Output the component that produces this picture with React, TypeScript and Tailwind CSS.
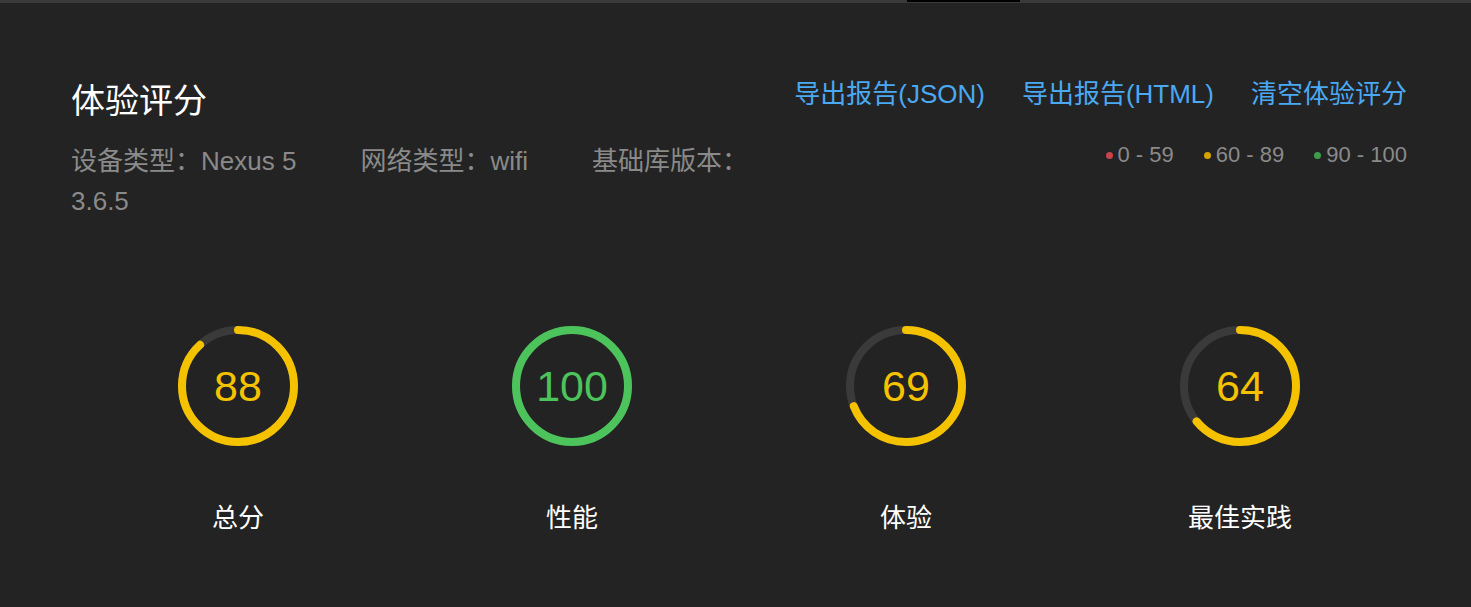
const scores = [
  { label: "总分", value: 88 },
  { label: "性能", value: 100 },
  { label: "体验", value: 69 },
  { label: "最佳实践", value: 64 },
];

function colorOf(v: number) {
  if (v >= 90) return "#4cc35b";
  if (v >= 60) return "#f5c200";
  return "#d9474f";
}

function Gauge({ value }: { value: number }) {
  const r = 56;
  const c = 2 * Math.PI * r;
  const color = colorOf(value);
  return (
    <div className="relative h-[120px] w-[120px]">
      <svg width="120" height="120" viewBox="0 0 120 120" className="-rotate-90">
        <circle cx="60" cy="60" r={r} fill="none" stroke="#3a3a3a" strokeWidth="8" />
        <circle
          cx="60"
          cy="60"
          r={r}
          fill="none"
          stroke={color}
          strokeWidth="8"
          strokeLinecap="round"
          strokeDasharray={`${(value / 100) * c} ${c}`}
        />
      </svg>
      <div
        className="absolute inset-0 flex items-center justify-center text-[43px] leading-none"
        style={{ color }}
      >
        {value}
      </div>
    </div>
  );
}

export default function App() {
  return (
    <div
      className="min-h-[607px] bg-[#232323]"
      style={{ fontFamily: '"Liberation Sans", "Noto Sans CJK SC", sans-serif' }}
    >
      <div className="h-[3px] bg-[#3a3a3a]">
        <div className="ml-[907px] h-[2px] w-[113px] bg-black" />
      </div>

      <div className="pl-[71px] pr-[64px] pt-[73px]">
        <div className="flex items-start justify-between">
          <div className="mt-[5px]">
            <h1 className="text-[34px] leading-[40px] text-white">体验评分</h1>
            <div className="mt-[20px] flex w-[700px] flex-wrap text-[26px] leading-[40px] text-[#8a8a8a]">
              <span className="mr-[64px]">设备类型：Nexus 5</span>
              <span className="mr-[64px]">网络类型：wifi</span>
              <span>基础库版本：</span>
              <span className="w-full">3.6.5</span>
            </div>
          </div>

          <div className="flex flex-col items-end">
            <div className="flex gap-[37px] text-[26px] leading-[36px] text-[#4aa9f2]">
              <span>导出报告(JSON)</span>
              <span>导出报告(HTML)</span>
              <span>清空体验评分</span>
            </div>
            <div className="mt-[28px] flex items-center gap-[30px] text-[22px] leading-[30px] text-[#8a8a8a]">
              <span className="flex items-center gap-[5px]">
                <span className="h-[7px] w-[7px] rounded-full bg-[#c9434b]" />0 - 59
              </span>
              <span className="flex items-center gap-[5px]">
                <span className="h-[7px] w-[7px] rounded-full bg-[#d6a300]" />60 - 89
              </span>
              <span className="flex items-center gap-[5px]">
                <span className="h-[7px] w-[7px] rounded-full bg-[#3c9c4c]" />90 - 100
              </span>
            </div>
          </div>
        </div>

        <div className="mt-[105px] grid grid-cols-4">
          {scores.map((s) => (
            <div key={s.label} className="flex flex-col items-center">
              <Gauge value={s.value} />
              <div className="mt-[54px] text-[26px] leading-[36px] text-white">{s.label}</div>
            </div>
          ))}
        </div>
      </div>
    </div>
  );
}
